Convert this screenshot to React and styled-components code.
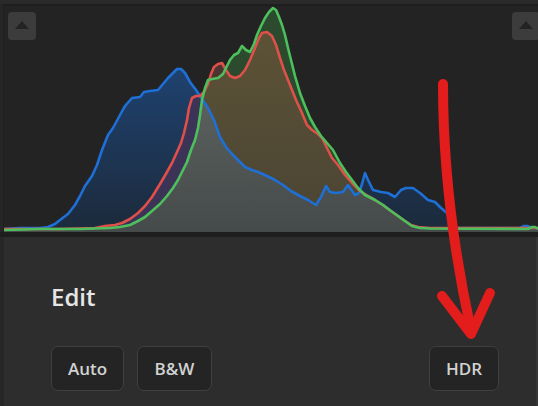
import React from 'react';
import styled, { createGlobalStyle } from 'styled-components';

const GlobalStyle = createGlobalStyle`
	html, body {
		margin: 0;
		padding: 0;
		background: #262626;
		font-family: 'Open Sans', 'Liberation Sans', sans-serif;
	}
`;

// histogram samples, in page pixels (x, y), baseline near y = 229
const BLUE = [
	[4, 229], [20, 228], [40, 228], [48, 227], [55, 224], [60, 220], [68, 214], [75, 205], [80, 196],
	[85, 186], [92, 176], [97, 165], [102, 150], [108, 135], [113, 128], [120, 115], [125, 106],
	[132, 98], [140, 97], [144, 92], [150, 91], [158, 90], [163, 84], [168, 78], [173, 73], [177, 69],
	[181, 69], [185, 73], [190, 82], [196, 90], [202, 99], [208, 108], [214, 120], [220, 137],
	[226, 147], [232, 154], [238, 160], [245, 167], [252, 170], [258, 172], [267, 176], [275, 180],
	[283, 185], [291, 191], [300, 196], [308, 200], [316, 205], [321, 197], [326, 186], [330, 192],
	[336, 193], [343, 192], [348, 185], [355, 195], [359, 193], [362, 184], [365, 173], [368, 180],
	[373, 190], [381, 192], [388, 193], [395, 197], [401, 190], [406, 188], [413, 188], [420, 193],
	[428, 200], [435, 202], [441, 208], [447, 213], [450, 220], [453, 226], [458, 228], [520, 228],
	[524, 226], [528, 226], [531, 228], [538, 228],
];

const RED = [
	[4, 229], [60, 229], [95, 228], [105, 226], [115, 225], [122, 223], [130, 219], [138, 213],
	[145, 206], [152, 197], [160, 184], [167, 172], [172, 163], [177, 152], [181, 143], [184, 133],
	[187, 120], [189, 108], [192, 98], [196, 96], [200, 96], [204, 92], [208, 84], [211, 74],
	[214, 67], [218, 64], [222, 63], [226, 70], [230, 76], [235, 78], [240, 76], [245, 70], [250, 60],
	[255, 48], [259, 38], [262, 33], [267, 32], [272, 36], [276, 45], [280, 58], [284, 70], [290, 85],
	[296, 100], [302, 113], [307, 125], [312, 130], [318, 134], [322, 138], [327, 148], [332, 158],
	[338, 165], [345, 175], [352, 183], [360, 191], [368, 196], [375, 200], [383, 205], [391, 211],
	[398, 216], [405, 221], [411, 225], [418, 227], [430, 228], [538, 228],
];

const GREEN = [
	[4, 230], [40, 229], [80, 229], [110, 228], [120, 227], [130, 225], [138, 221], [145, 217],
	[152, 211], [160, 204], [167, 196], [173, 188], [178, 180], [183, 170], [187, 162], [191, 150],
	[195, 140], [198, 128], [200, 115], [202, 100], [205, 88], [208, 80], [212, 79], [218, 78],
	[223, 74], [226, 68], [230, 60], [234, 55], [238, 53], [242, 46], [246, 50], [250, 52], [254, 44],
	[257, 35], [261, 26], [265, 18], [269, 12], [273, 8], [276, 10], [279, 17], [282, 25], [285, 35],
	[288, 48], [291, 60], [295, 76], [300, 93], [305, 106], [310, 118], [315, 127], [321, 136],
	[327, 143], [333, 150], [340, 163], [346, 172], [352, 180], [358, 188], [365, 195], [375, 200],
	[383, 205], [391, 211], [398, 216], [405, 221], [412, 226], [420, 228], [430, 228.5], [528, 229],
	[532, 227], [535, 227], [538, 229],
];

const line = pts => 'M' + pts.map(p => p.join(',')).join(' L');
const area = pts => line(pts) + ' L538,233 L4,233 Z';

const Page = styled.div`
	position: relative;
	width: 538px;
	height: 406px;
	display: flex;
	flex-direction: column;
	background: #262626;
	overflow: hidden;
`;

const TopStrip = styled.div`
	height: 4px;
	background: #2a2a2a;
`;

const HistPanel = styled.div`
	position: relative;
	height: 226px;
	margin-left: 3px;
	border-top: 2px solid #1e1e1e;
	border-left: 1px solid #1f1f1f;
	background: #232323;
`;

const Chart = styled.svg`
	display: block;
	width: 534px;
	height: 226px;
`;

const CollapseButton = styled.div`
	position: absolute;
	top: 6px;
	${p => (p.$right ? 'right: -2px;' : 'left: 4px;')}
	width: 28px;
	height: 28px;
	border-radius: 4px;
	background: #3c3c3c;
	display: flex;
	align-items: center;
	justify-content: center;

	&::after {
		content: '';
		width: 0;
		height: 0;
		margin-top: -2px;
		border-left: 7px solid transparent;
		border-right: 7px solid transparent;
		border-bottom: 8px solid #232323;
	}
`;

const Divider = styled.div`
	height: 5px;
	background: #1e1e1e;
`;

const EditPanel = styled.div`
	flex: 1;
	margin-left: 3px;
	padding: 48px 37px 0 47px;
	background: #2d2d2d;
	border-left: 1px solid #262626;
	border-right: 2px solid #363636;
	box-sizing: border-box;
	display: flex;
	flex-direction: column;
`;

const Title = styled.div`
	font-size: 24px;
	line-height: 24px;
	font-weight: 600;
	color: #e6e6e6;
`;

const ButtonRow = styled.div`
	display: flex;
	gap: 13px;
	margin-top: 37px;
`;

const Spacer = styled.div`
	flex: 1;
`;

const ToolButton = styled.div`
	width: ${p => p.$w}px;
	height: 45px;
	box-sizing: border-box;
	border: 1.5px solid #3f3f3f;
	border-radius: 7px;
	background: #242424;
	color: #d2d2d2;
	font-size: 17px;
	font-weight: 600;
	display: flex;
	align-items: center;
	justify-content: center;
`;

const Overlay = styled.svg`
	position: absolute;
	left: 0;
	top: 0;
	width: 538px;
	height: 406px;
	pointer-events: none;
`;

function Histogram() {
	return (
		<Chart viewBox="4 6 534 226">
			<defs>
				<clipPath id="clipBlue"><path d={area(BLUE)} /></clipPath>
				<clipPath id="clipRed"><path d={area(RED)} /></clipPath>
				<linearGradient id="gBlue" gradientUnits="userSpaceOnUse" x1="0" y1="68" x2="0" y2="232">
					<stop offset="0" stopColor="#1f426f" />
					<stop offset="1" stopColor="#1c2a3b" />
				</linearGradient>
				<linearGradient id="gOlive" gradientUnits="userSpaceOnUse" x1="0" y1="30" x2="0" y2="232">
					<stop offset="0" stopColor="#5c5236" />
					<stop offset="1" stopColor="#4a4433" />
				</linearGradient>
				<linearGradient id="gGray" gradientUnits="userSpaceOnUse" x1="0" y1="70" x2="0" y2="232">
					<stop offset="0" stopColor="#5f6562" />
					<stop offset="1" stopColor="#454a4a" />
				</linearGradient>
			</defs>
			<path d={area(BLUE)} fill="url(#gBlue)" />
			<path d={area(RED)} fill="#4c3530" />
			<path d={area(GREEN)} fill="#2b4a2e" />
			<g clipPath="url(#clipRed)">
				<path d={area(GREEN)} fill="url(#gOlive)" />
			</g>
			<g clipPath="url(#clipBlue)">
				<path d={area(RED)} fill="#3b3456" />
				<g clipPath="url(#clipRed)">
					<path d={area(GREEN)} fill="url(#gGray)" />
				</g>
			</g>
			<path d={line(BLUE)} fill="none" stroke="#1e6fd6" strokeWidth="2.6" strokeLinejoin="round" />
			<path d={line(RED)} fill="none" stroke="#e0504b" strokeWidth="2.6" strokeLinejoin="round" />
			<path d={line(GREEN)} fill="none" stroke="#4dbf5c" strokeWidth="2.6" strokeLinejoin="round" />
		</Chart>
	);
}

export default function App() {
	return (
		<Page>
			<GlobalStyle />
			<TopStrip />
			<HistPanel>
				<Histogram />
				<CollapseButton />
				<CollapseButton $right />
			</HistPanel>
			<Divider />
			<EditPanel>
				<Title>Edit</Title>
				<ButtonRow>
					<ToolButton $w={73}>Auto</ToolButton>
					<ToolButton $w={75}>B&amp;W</ToolButton>
					<Spacer />
					<ToolButton $w={70}>HDR</ToolButton>
				</ButtonRow>
			</EditPanel>
			<Overlay viewBox="0 0 538 406">
				<path d="M443,84 C443,150 449,230 471,330" fill="none" stroke="#e31c1c" strokeWidth="10" strokeLinecap="round" />
				<path d="M442,296 L471,334 L490,293" fill="none" stroke="#e31c1c" strokeWidth="10" strokeLinecap="round" strokeLinejoin="round" />
			</Overlay>
		</Page>
	);
}
